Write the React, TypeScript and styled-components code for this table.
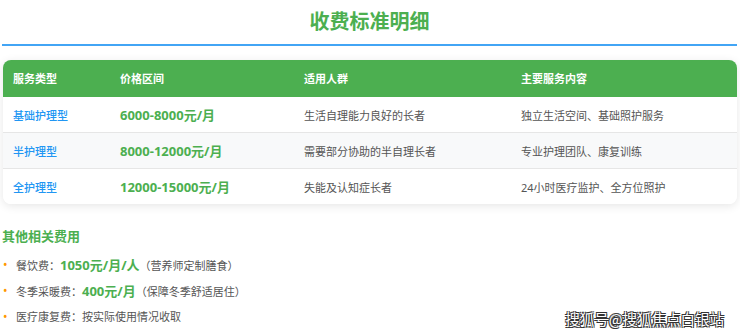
import styled, { createGlobalStyle } from 'styled-components'

const GlobalStyle = createGlobalStyle`
    html, body {
        margin: 0;
        padding: 0;
        background: #fff;
    }
    body {
        font-family: 'Noto Sans', 'Noto Sans CJK SC', sans-serif;
        color: #555;
    }
`

const plans = [
    { type: '基础护理型', price: '6000-8000元/月', people: '生活自理能力良好的长者', content: '独立生活空间、基础照护服务' },
    { type: '半护理型', price: '8000-12000元/月', people: '需要部分协助的半自理长者', content: '专业护理团队、康复训练' },
    { type: '全护理型', price: '12000-15000元/月', people: '失能及认知症长者', content: '24小时医疗监护、全方位照护' },
]

const columns = [
    { label: '服务类型', width: 107 },
    { label: '价格区间', width: 184 },
    { label: '适用人群', width: 217 },
    { label: '主要服务内容', width: 226 },
]

function App() {
    return (
        <Page>
            <GlobalStyle />
            <Title>收费标准明细</Title>
            <Card>
                <Table>
                    <colgroup>
                        {columns.map((c) => (
                            <col key={c.label} style={{ width: c.width }} />
                        ))}
                    </colgroup>
                    <thead>
                        <tr>
                            {columns.map((c) => (
                                <Th key={c.label}>{c.label}</Th>
                            ))}
                        </tr>
                    </thead>
                    <tbody>
                        {plans.map((p, i) => (
                            <Row key={p.type} $striped={i % 2 === 1}>
                                <Td $kind='type'>{p.type}</Td>
                                <Td $kind='price'>{p.price}</Td>
                                <Td>{p.people}</Td>
                                <Td>{p.content}</Td>
                            </Row>
                        ))}
                    </tbody>
                </Table>
            </Card>
            <SubTitle>其他相关费用</SubTitle>
            <FeeList>
                <Fee>
                    餐饮费：<Amount>1050元/月/人</Amount>（营养师定制膳食）
                </Fee>
                <Fee>
                    冬季采暖费：<Amount>400元/月</Amount>（保障冬季舒适居住）
                </Fee>
                <Fee>医疗康复费：按实际使用情况收取</Fee>
            </FeeList>
            <Watermark>搜狐号@搜狐焦点白银站</Watermark>
        </Page>
    )
}

export default App

const Page = styled.main`
    position: relative;
    width: 740px;
    height: 333px;
    overflow: hidden;
    padding: 0 3px 0 2px;
    box-sizing: border-box;
`

const Title = styled.h2`
    margin: 0;
    padding: 8px 0;
    font-size: 20px;
    line-height: 28px;
    font-weight: 700;
    color: #4caf50;
    text-align: center;
    border-bottom: 2px solid #42a5f5;
`

const Card = styled.div`
    margin: 14px 0 0 1px;
    border-radius: 8px;
    overflow: hidden;
    background: #fff;
    box-shadow: 0 2px 10px rgba(0, 0, 0, 0.1);
`

const Table = styled.table`
    width: 100%;
    border-collapse: collapse;
    table-layout: fixed;
`

const Th = styled.th`
    background: #4caf50;
    color: #fff;
    font-size: 11px;
    font-weight: 700;
    text-align: left;
    padding: 11px 10px;
    height: 15px;
    line-height: 15px;
`

const Row = styled.tr<{ $striped: boolean }>`
    background: ${(p) => (p.$striped ? '#f8f9fa' : '#fff')};
    border-bottom: 1px solid #e6e6e6;
    &:last-child {
        border-bottom: none;
    }
`

const Td = styled.td<{ $kind?: 'type' | 'price' }>`
    padding: 0 10px;
    height: 35px;
    font-size: ${(p) => (p.$kind === 'price' ? '13px' : '11px')};
    font-weight: ${(p) => (p.$kind === 'price' ? 700 : p.$kind === 'type' ? 500 : 400)};
    color: ${(p) => (p.$kind === 'price' ? '#4caf50' : p.$kind === 'type' ? '#2196f3' : '#555')};
    white-space: nowrap;
`

const SubTitle = styled.h3`
    margin: 23px 0 0;
    font-size: 13px;
    line-height: 18px;
    font-weight: 700;
    color: #4caf50;
`

const FeeList = styled.ul`
    list-style: none;
    margin: 11px 0 0;
    padding: 0;
    display: flex;
    flex-direction: column;
    gap: 7px;
`

const Fee = styled.li`
    position: relative;
    padding-left: 14px;
    font-size: 11px;
    line-height: 18px;
    color: #555;
    &::before {
        content: '•';
        position: absolute;
        left: 1px;
        top: 0;
        color: #ff9800;
        font-size: 12px;
    }
`

const Amount = styled.span`
    color: #4caf50;
    font-size: 13px;
    font-weight: 700;
`

const Watermark = styled.div`
    position: absolute;
    right: 16px;
    bottom: 5px;
    font-size: 14.5px;
    line-height: 18px;
    color: #fff;
    font-family: 'Noto Sans CJK SC', sans-serif;
    text-shadow: -1px -1px 0 #333, 1px -1px 0 #333, -1px 1px 0 #333, 1px 1px 0 #333;
`
